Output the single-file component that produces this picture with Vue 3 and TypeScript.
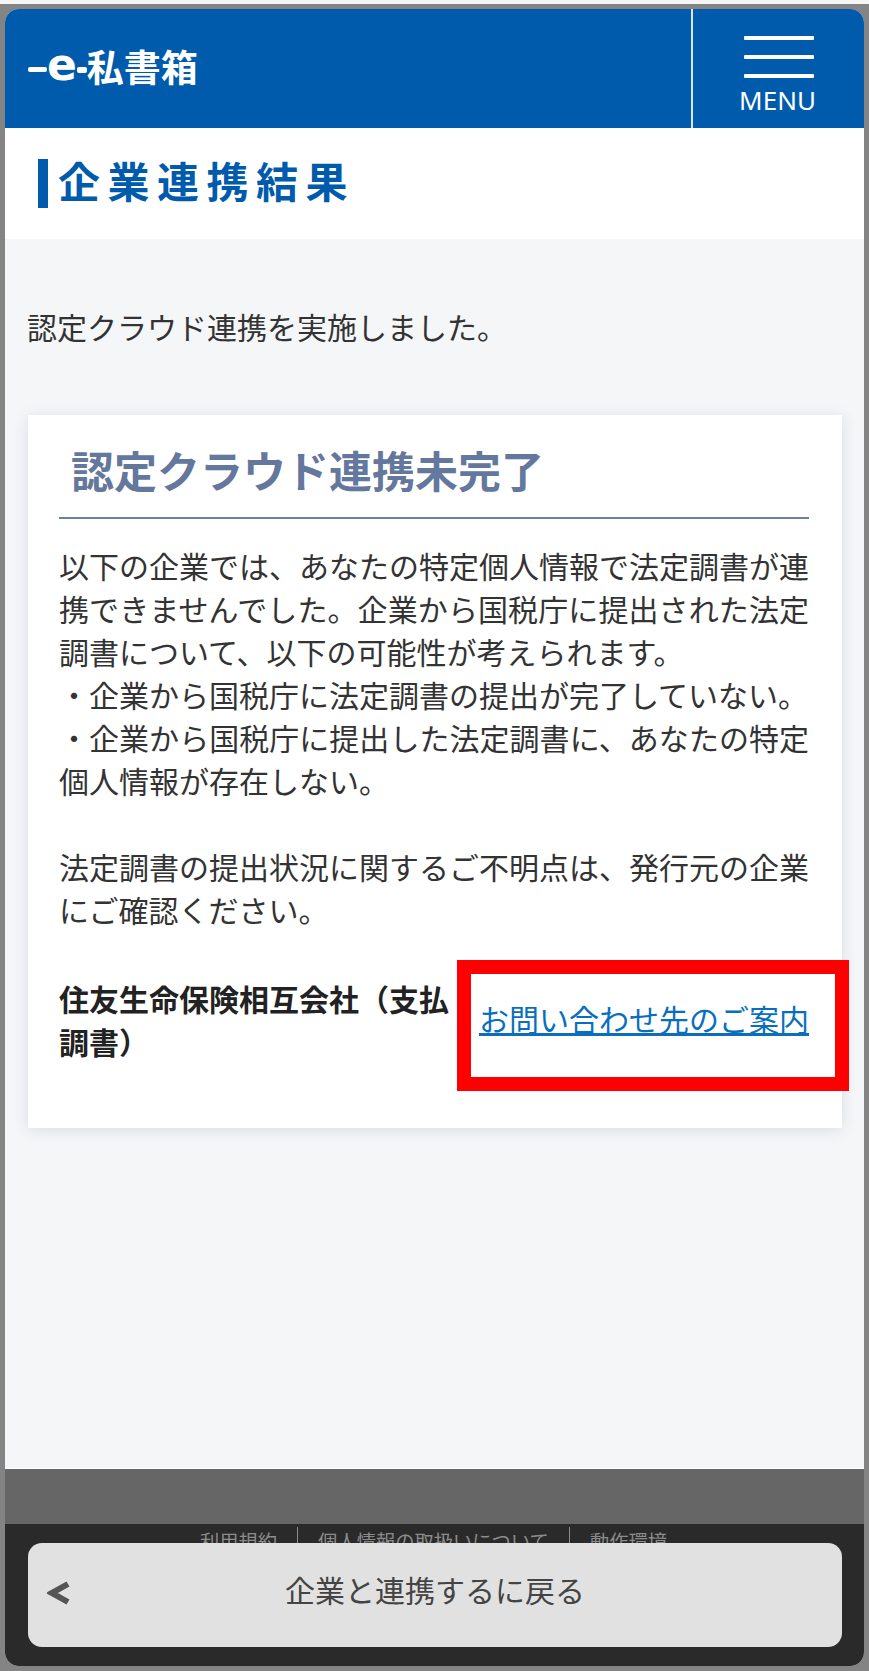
<script setup lang="ts">
const footerLinks: string[] = ['利用規約', '個人情報の取扱いについて', '動作環境']
</script>

<template>
  <div class="page">
    <div class="frame">
      <div class="screen">
        <header class="header">
          <div class="logo">
            <span class="logo-dash"></span><span class="logo-e">e</span><span class="logo-dash short"></span><span class="logo-name">私書箱</span>
          </div>
          <div class="menu">
            <span class="bar"></span>
            <span class="bar"></span>
            <span class="bar"></span>
            <span class="menu-label">MENU</span>
          </div>
        </header>

        <section class="title-band">
          <h1 class="title">企業連携結果</h1>
        </section>

        <main class="content">
          <p class="lead">認定クラウド連携を実施しました。</p>
          <div class="card">
            <h2 class="card-title">認定クラウド連携未完了</h2>
            <p class="card-text">
              以下の企業では、あなたの特定個人情報で法定調書が連携できませんでした。企業から国税庁に提出された法定調書について、以下の可能性が考えられます。<br />
              ・企業から国税庁に法定調書の提出が完了していない。<br />
              ・企業から国税庁に提出した法定調書に、あなたの特定個人情報が存在しない。<br />
              <br />
              法定調書の提出状況に関するご不明点は、発行元の企業にご確認ください。
            </p>
            <div class="company">
              <div class="company-name">住友生命保険相互会社（支払調書）</div>
              <a class="company-link" href="#">お問い合わせ先のご案内</a>
              <span class="highlight"></span>
            </div>
          </div>
        </main>

        <footer class="footer">
          <div class="footer-top"></div>
          <div class="footer-bottom">
            <nav class="footer-links">
              <a v-for="link in footerLinks" :key="link" class="footer-link">{{ link }}</a>
            </nav>
          </div>
        </footer>

        <div class="action-bar">
          <button class="back" type="button">
            <svg class="chevron" viewBox="0 0 24 24" width="24" height="24" aria-hidden="true">
              <path d="M21 3 L5 12 L21 21" fill="none" stroke="#555" stroke-width="6" />
            </svg>
            企業と連携するに戻る
          </button>
        </div>
      </div>
    </div>
  </div>
</template>

<style>
html,
body {
  margin: 0;
  padding: 0;
  background: #f5f5f5;
}
</style>

<style scoped>
* {
  box-sizing: border-box;
}
.page {
  width: 869px;
  height: 1671px;
  padding-top: 4px;
  background: #f5f5f5;
  font-family: "Noto Sans CJK JP", "Noto Sans", sans-serif;
  color: #333;
  text-spacing-trim: space-all;
}
.frame {
  height: 1667px;
  padding: 5px;
  background: #848484;
}
.screen {
  position: relative;
  height: 100%;
  display: flex;
  flex-direction: column;
  overflow: hidden;
  border-radius: 14px;
  background: #f5f6f8;
}
.header {
  flex: none;
  height: 119px;
  display: flex;
  justify-content: space-between;
  background: #005bac;
}
.logo {
  display: flex;
  align-items: center;
  padding: 0 0 4px 23px;
  color: #fff;
}
.logo-dash {
  flex: none;
  width: 19px;
  height: 5px;
  margin-top: 5px;
  border-radius: 2px;
  background: #fff;
}
.logo-dash.short {
  width: 10px;
  height: 6px;
  margin: 6px 1px 0 2px;
}
.logo-e {
  font-family: "DejaVu Sans", sans-serif;
  font-weight: 700;
  font-size: 44px;
  line-height: 1;
  margin-top: -3px;
  margin-right: -2px;
}
.logo-name {
  font-size: 37px;
  font-weight: 700;
  line-height: 1;
  margin-left: -1px;
}
.menu {
  flex: none;
  width: 173px;
  display: flex;
  flex-direction: column;
  align-items: center;
  border-left: 2px solid #d8e6f3;
}
.bar {
  flex: none;
  width: 70px;
  height: 4px;
  margin-top: 15px;
  border-radius: 1px;
  background: #fff;
}
.bar:first-child {
  margin-top: 27px;
}
.menu-label {
  margin: 7px 2px 0 0;
  font-family: "Noto Sans", sans-serif;
  font-size: 26px;
  line-height: 30px;
  color: #fff;
}
.title-band {
  flex: none;
  height: 111px;
  padding: 31px 0 0 33px;
  background: #fff;
}
.title {
  margin: 0;
  height: 49px;
  padding-left: 10px;
  border-left: 10px solid #005bac;
  font-size: 42px;
  font-weight: 700;
  line-height: 41px;
  letter-spacing: 7.5px;
  color: #005bac;
}
.content {
  flex: 1;
  padding: 0 22px 0 23px;
}
.lead {
  margin: 0 0 0 -1px;
  padding-top: 66px;
  font-size: 30px;
  line-height: 43px;
  color: #333;
}
.card {
  margin-top: 67px;
  height: 713px;
  padding: 26px 33px 0 31px;
  background: #fff;
  box-shadow: 0 2px 14px rgba(60, 70, 90, 0.14);
}
.card-title {
  margin: 0;
  height: 78px;
  padding-left: 12px;
  border-bottom: 2px solid #6b7fa8;
  font-size: 43px;
  font-weight: 700;
  line-height: 56px;
  color: #64779d;
  white-space: nowrap;
}
.card-text {
  margin: 25px 0 0;
  font-size: 30px;
  line-height: 43px;
  text-align: justify;
}
.company {
  position: relative;
  display: flex;
  align-items: center;
  margin-top: 44px;
}
.company-name {
  width: 390px;
  margin: 2px 30px 0 0;
  flex: none;
  font-size: 30px;
  font-weight: 700;
  line-height: 43px;
  color: #222;
}
.company-link {
  margin-bottom: 2px;
  font-size: 30px;
  line-height: 40px;
  white-space: nowrap;
  color: #0a6ebd;
  text-decoration: underline;
}
.highlight {
  position: absolute;
  left: 398px;
  top: -15px;
  width: 392px;
  height: 131px;
  border: 14px solid #f00;
  pointer-events: none;
}
.footer {
  flex: none;
  height: 198px;
  display: flex;
  flex-direction: column;
  border-top: 1px solid #fff;
}
.footer-top {
  flex: none;
  height: 55px;
  background: #666;
}
.footer-bottom {
  flex: 1;
  background: #2a2a2a;
}
.footer-links {
  display: flex;
  justify-content: center;
  padding-top: 3px;
  padding-right: 2px;
}
.footer-link {
  padding: 0 20px;
  font-size: 19.3px;
  line-height: 28px;
  color: #8c8c8c;
  border-left: 1px solid #8c8c8c;
}
.footer-link:first-child {
  border-left: 0;
}
.action-bar {
  position: absolute;
  left: 23px;
  right: 22px;
  bottom: 19px;
}
.back {
  position: relative;
  display: block;
  width: 100%;
  height: 104px;
  padding: 0 0 12px;
  border: 0;
  border-radius: 14px;
  background: #e1e1e1;
  font-family: inherit;
  font-size: 30px;
  color: #444;
}
.chevron {
  position: absolute;
  left: 19px;
  top: 38px;
}
</style>
